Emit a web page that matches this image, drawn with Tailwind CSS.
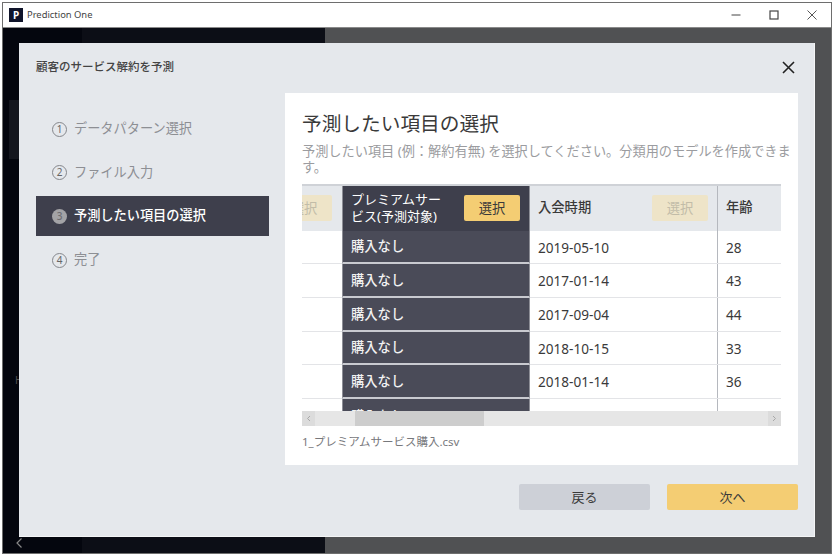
<!DOCTYPE html>
<html lang="ja">
<head>
<meta charset="utf-8">
<script src="https://cdn.jsdelivr.net/npm/@tailwindcss/browser@4"></script>
</head>
<body class="bg-white">
<div class="relative w-[834px] h-[557px] overflow-hidden bg-white font-['Noto_Sans','Noto_Sans_CJK_JP',sans-serif]">
  <div class="ml-[2px] mt-[2px] w-[830px] h-[552px] border border-[#6e6e6e] flex flex-col bg-white">
    <div class="h-[25px] flex items-center shrink-0 bg-white border-b border-[#8a8a8a]">
      <div class="ml-[6px] w-[14px] h-[14px] bg-[#10142a] text-white text-[10px] leading-[14px] font-bold text-center">P</div>
      <span class="ml-[4px] text-[#444] text-[9.4px] leading-none">Prediction One</span>
      <div class="ml-auto flex items-center h-full text-[#333]">
        <div class="w-[38px] flex justify-center"><svg width="10" height="10" viewBox="0 0 10 10"><path d="M0.5 5H9.5" stroke="#444" stroke-width="1"/></svg></div>
        <div class="w-[38px] flex justify-center"><svg width="10" height="10" viewBox="0 0 10 10"><rect x="1" y="1" width="8" height="8" fill="none" stroke="#444" stroke-width="1.2"/></svg></div>
        <div class="w-[38px] flex justify-center"><svg width="10" height="10" viewBox="0 0 10 10"><path d="M0.5 0.5L9.5 9.5M9.5 0.5L0.5 9.5" stroke="#444" stroke-width="0.9"/></svg></div>
      </div>
    </div>
    <div class="flex-1 flex relative">
      <div class="w-[79px] bg-[#04060e]"></div>
      <div class="w-[243px] bg-[#0c0e16]"></div>
      <div class="flex-1 bg-[#505153]"></div>
    </div>
  </div>
  <div class="absolute left-[9px] top-[100px] w-[10px] h-[59px] bg-[#14161e]"></div>
  <div class="absolute left-[15px] top-[375px] text-[#555] text-[10px] leading-none">H</div>
  <svg class="absolute left-[15px] top-[537px]" width="8" height="12" viewBox="0 0 8 12"><path d="M6.5 1.5L2 6L6.5 10.5" fill="none" stroke="#888" stroke-width="1.2"/></svg>

  <div class="absolute left-[19px] top-[43px] w-[796px] h-[494px] bg-[#e5e8ec] border-b border-r border-[#f4f5f6] flex flex-col">
    <div class="h-[50px] shrink-0 flex items-center px-[17px] pb-[2px]">
      <span class="text-[11.5px] text-[#444] font-medium leading-none">顧客のサービス解約を予測</span>
      <svg class="ml-auto mr-[2px]" width="13" height="13" viewBox="0 0 13 13"><path d="M1 1L12 12M12 1L1 12" stroke="#222" stroke-width="1.6"/></svg>
    </div>
    <div class="flex flex-1 pl-[17px] pr-[16px]">
      <div class="w-[233px] shrink-0 pt-[16px] flex flex-col gap-[3.7px] text-[13.2px]">
        <div class="h-[40px] flex items-center pl-[16px] text-[#8d8f94]"><span class="w-[15px] h-[15px] rounded-full border border-[#85878c] text-[10px] leading-[13px] text-center text-[#666] mr-[7px]">1</span>データパターン選択</div>
        <div class="h-[40px] flex items-center pl-[16px] text-[#8d8f94]"><span class="w-[15px] h-[15px] rounded-full border border-[#85878c] text-[10px] leading-[13px] text-center text-[#666] mr-[7px]">2</span>ファイル入力</div>
        <div class="h-[40px] flex items-center pl-[16px] bg-[#3e3f4c] text-white font-medium"><span class="w-[15px] h-[15px] rounded-full bg-[#a3a3a6] text-[10px] leading-[15px] text-center text-[#6d6d72] mr-[7px]">3</span>予測したい項目の選択</div>
        <div class="h-[40px] flex items-center pl-[16px] text-[#8d8f94]"><span class="w-[15px] h-[15px] rounded-full border border-[#85878c] text-[10px] leading-[13px] text-center text-[#666] mr-[7px]">4</span>完了</div>
      </div>
      <div class="ml-[16px] w-[513px] h-[372px] bg-white flex flex-col px-[17px] shrink-0">
        <div class="pt-[17px] text-[19.7px] leading-[27px] text-[#3a3a3a] whitespace-nowrap">予測したい項目の選択</div>
        <div class="mt-[6px] w-[492px] text-[13.2px] leading-[16px] text-[#9b9ca0] h-[41px]">予測したい項目 (例：解約有無) を選択してください。分類用のモデルを作成できます。</div>
        <div class="w-[479px] h-[242px] overflow-hidden relative border-t-2 border-[#cfd2d7] flex flex-col text-[13.3px] text-[#3a3a3a] shrink-0">
          <div class="flex h-[44.5px] shrink-0 bg-[#e5e8ec]">
            <div class="w-[40px] shrink-0 overflow-hidden relative"><div class="absolute right-[10px] top-[9px] w-[56px] h-[26px] rounded-[2px] bg-[#eee4c8] text-[#c2bca8] leading-[26px] text-center">選択</div></div>
            <div class="w-[188px] shrink-0 bg-[#3e3f4c] text-white flex items-center pl-[8px] pr-[9px] border-x border-[#8d8e96]">
              <span class="text-[13px] leading-[17px] w-[100px]">プレミアムサービス(予測対象)</span>
              <span class="ml-auto w-[56px] h-[26px] rounded-[2px] bg-[#f4cd73] text-[#3a3a3a] leading-[26px] text-center">選択</span>
            </div>
            <div class="w-[187px] shrink-0 flex items-center pl-[8px] pr-[9px] font-medium">
              <span>入会時期</span>
              <span class="ml-auto w-[56px] h-[26px] rounded-[2px] bg-[#eee4c8] text-[#c2bca8] font-normal leading-[26px] text-center">選択</span>
            </div>
            <div class="flex-1 border-l border-[#b5b8be] flex items-center pl-[8px] font-medium">年齢</div>
          </div>
          <div class="flex h-[33.7px] shrink-0 border-b border-[#e3e4e7]"><div class="w-[40px] shrink-0"></div><div class="w-[188px] shrink-0 bg-[#4a4b58] text-[#f2f2f2] font-medium flex items-center pl-[8px] pt-[2px] border-x border-[#8d8e96] border-b-2 border-b-[#c9cad0] -mb-px">購入なし</div><div class="w-[187px] shrink-0 flex items-center pl-[8px] pt-[2px] text-[13.6px]">2019-05-10</div><div class="flex-1 border-l border-[#b5b8be] flex items-center pl-[8px] pt-[2px] text-[13.6px]">28</div></div>
          <div class="flex h-[33.7px] shrink-0 border-b border-[#e3e4e7]"><div class="w-[40px] shrink-0"></div><div class="w-[188px] shrink-0 bg-[#4a4b58] text-[#f2f2f2] font-medium flex items-center pl-[8px] pt-[2px] border-x border-[#8d8e96] border-b-2 border-b-[#c9cad0] -mb-px">購入なし</div><div class="w-[187px] shrink-0 flex items-center pl-[8px] pt-[2px] text-[13.6px]">2017-01-14</div><div class="flex-1 border-l border-[#b5b8be] flex items-center pl-[8px] pt-[2px] text-[13.6px]">43</div></div>
          <div class="flex h-[33.7px] shrink-0 border-b border-[#e3e4e7]"><div class="w-[40px] shrink-0"></div><div class="w-[188px] shrink-0 bg-[#4a4b58] text-[#f2f2f2] font-medium flex items-center pl-[8px] pt-[2px] border-x border-[#8d8e96] border-b-2 border-b-[#c9cad0] -mb-px">購入なし</div><div class="w-[187px] shrink-0 flex items-center pl-[8px] pt-[2px] text-[13.6px]">2017-09-04</div><div class="flex-1 border-l border-[#b5b8be] flex items-center pl-[8px] pt-[2px] text-[13.6px]">44</div></div>
          <div class="flex h-[33.7px] shrink-0 border-b border-[#e3e4e7]"><div class="w-[40px] shrink-0"></div><div class="w-[188px] shrink-0 bg-[#4a4b58] text-[#f2f2f2] font-medium flex items-center pl-[8px] pt-[2px] border-x border-[#8d8e96] border-b-2 border-b-[#c9cad0] -mb-px">購入なし</div><div class="w-[187px] shrink-0 flex items-center pl-[8px] pt-[2px] text-[13.6px]">2018-10-15</div><div class="flex-1 border-l border-[#b5b8be] flex items-center pl-[8px] pt-[2px] text-[13.6px]">33</div></div>
          <div class="flex h-[33.7px] shrink-0 border-b border-[#e3e4e7]"><div class="w-[40px] shrink-0"></div><div class="w-[188px] shrink-0 bg-[#4a4b58] text-[#f2f2f2] font-medium flex items-center pl-[8px] pt-[2px] border-x border-[#8d8e96] border-b-2 border-b-[#c9cad0] -mb-px">購入なし</div><div class="w-[187px] shrink-0 flex items-center pl-[8px] pt-[2px] text-[13.6px]">2018-01-14</div><div class="flex-1 border-l border-[#b5b8be] flex items-center pl-[8px] pt-[2px] text-[13.6px]">36</div></div>
          <div class="flex h-[33.7px] shrink-0"><div class="w-[40px] shrink-0"></div><div class="w-[188px] shrink-0 bg-[#4a4b58] text-[#f2f2f2] font-medium flex items-center pl-[8px] pt-[2px] border-x border-[#8d8e96]">購入なし</div><div class="w-[187px] shrink-0 flex items-center pl-[8px] pt-[2px] text-[13.6px]">2018-03-17</div><div class="flex-1 border-l border-[#b5b8be] flex items-center pl-[8px] pt-[2px] text-[13.6px]">50</div></div>
          <div class="absolute left-0 right-0 bottom-0 h-[15px] bg-[#e6e6e6] flex items-center">
            <div class="w-[13px] h-full bg-[#dcdcdc] flex items-center justify-center"><svg width="5" height="7" viewBox="0 0 5 7"><path d="M4 1L1.5 3.5L4 6" fill="none" stroke="#a8a8a8" stroke-width="1"/></svg></div>
            <div class="ml-[40px] w-[129px] h-full bg-[#cdcdcd]"></div>
            <div class="ml-auto w-[13px] h-full bg-[#dcdcdc] flex items-center justify-center"><svg width="5" height="7" viewBox="0 0 5 7"><path d="M1 1L3.5 3.5L1 6" fill="none" stroke="#a8a8a8" stroke-width="1"/></svg></div>
          </div>
        </div>
        <div class="mt-[7.5px] text-[11.5px] leading-[16px] text-[#77787c]">1_プレミアムサービス購入.csv</div>
      </div>
    </div>
    <div class="h-[72px] shrink-0 flex justify-end gap-[17px] pr-[16px] pt-[19px] text-[13px] text-[#3a3a3a]">
      <div class="w-[131px] h-[26px] bg-[#cdd0d7] rounded-[2px] leading-[26px] text-center">戻る</div>
      <div class="w-[131px] h-[26px] bg-[#f4cd73] rounded-[2px] leading-[26px] text-center">次へ</div>
    </div>
  </div>
</div>
</body>
</html>
